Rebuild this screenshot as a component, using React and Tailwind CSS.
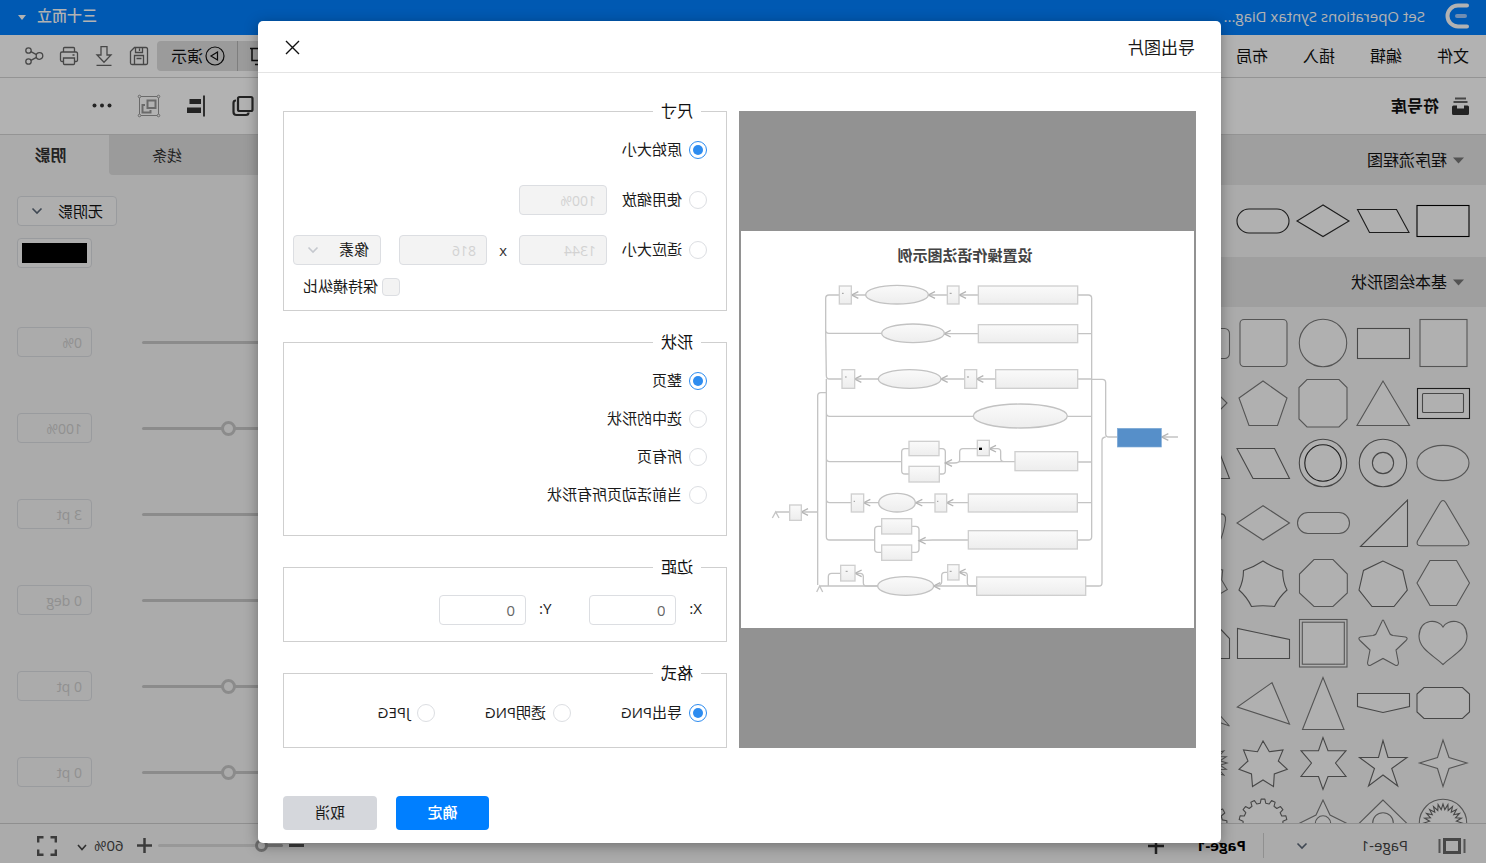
import React from "react";

const THIN = "#7a7a7a";
const MID = "#666";
const DARK = "#2a2a2a";

function Svg({ w, h, className = "", children }) {
  return (
    <svg width={w} height={h} viewBox={`0 0 ${w} ${h}`} fill="none" aria-hidden="true" className={`shrink-0 ${className}`}>
      {children}
    </svg>
  );
}

function Chevron({ className = "" }) {
  return (
    <Svg w={12} h={8} className={className}>
      <path d="M1.5 1.5 L6 6 L10.5 1.5" stroke="currentColor" strokeWidth="1.6" />
    </Svg>
  );
}

/* ---------- stencil shapes, each drawn in a 60 x 60 cell ---------- */

function burst(n, outer, inner, cx = 30, cy = 30) {
  const pts = [];
  for (let i = 0; i < n * 2; i++) {
    const r = i % 2 ? inner : outer;
    const a = (Math.PI * i) / n - Math.PI / 2;
    pts.push(`${(cx + r * Math.cos(a)).toFixed(1)},${(cy + r * Math.sin(a)).toFixed(1)}`);
  }
  return pts.join(" ");
}

function gear(n, outer, inner) {
  const pts = [];
  const step = (Math.PI * 2) / n;
  const at = (r, a) => pts.push(`${(30 + r * Math.cos(a)).toFixed(1)},${(30 + r * Math.sin(a)).toFixed(1)}`);
  for (let i = 0; i < n; i++) {
    const a = i * step - Math.PI / 2;
    at(inner, a - step * 0.3);
    at(outer, a - step * 0.18);
    at(outer, a + step * 0.18);
    at(inner, a + step * 0.3);
  }
  return pts.join(" ");
}

const P = (points, stroke = THIN) => <polygon points={points} stroke={stroke} />;
const R = (x, y, w, h, rx = 0, stroke = THIN) => <rect x={x} y={y} width={w} height={h} rx={rx} stroke={stroke} />;

const flowShapes = [
  R(4, 14.5, 52, 31, 0, "#000"),
  P("16.5,18.5 55.5,18.5 43.5,41.5 4,41.5", DARK),
  P("30,14 56,30 30,45.5 4,30", DARK),
  R(4, 18, 52, 24, 12, DARK),
];

const basicShapes = [
  R(6, 6.5, 47, 47),
  R(3.5, 15.5, 52, 30, 0, MID),
  <circle cx="30" cy="30" r="23.7" stroke={THIN} />,
  R(6, 6.5, 47, 47, 4),
  R(3.5, 15.5, 52, 30, 5),

  <>
    {R(3.5, 15.5, 52, 30, 0, DARK)}
    {R(9.5, 20.5, 41, 19, 1, MID)}
  </>,
  P("30,8 56,52.5 3.5,52.5"),
  P("14,6.5 46,6.5 54,14.5 54,46 46,54 14,54 6,46 6,14.5"),
  P("30,8 54,25 44,52.5 15.5,52.5 6,25"),
  P("30,6 54,30 30,54 6,30"),

  <ellipse cx="30" cy="30" rx="26" ry="17.6" stroke={THIN} />,
  <>
    <circle cx="30" cy="30" r="23.7" stroke={MID} />
    <circle cx="30" cy="30" r="10.6" stroke={MID} />
  </>,
  <>
    <circle cx="30" cy="30" r="23.7" stroke={MID} />
    <circle cx="30" cy="30" r="18.2" stroke={DARK} />
  </>,
  P("18.5,15.5 56,15.5 40,45.5 3.5,45.5", MID),
  P("3.5,45.5 15,15.5 45,15.5 56,45.5", MID),

  <path d="M27.3 9.5 Q30 5.5 32.7 9.5 L55.5 48 Q57 52.5 52.5 52.7 H7.5 Q3 52.5 4.5 48 Z" stroke={THIN} />,
  P("5.5,7 5.5,53.5 52.5,53.5", MID),
  R(3.5, 19.5, 52, 21, 10.5),
  P("30,12.7 56,30 30,47 3.5,30"),
  <path d="M14 21 Q7 20 7.5 27 Q9 40 14 50 Q30 56 46 50 Q51 40 52.5 27 Q53 20 46 21 Z" stroke={THIN} />,

  P("16.5,7.5 43,7.5 56,30 43,52.5 16.5,52.5 3.5,30"),
  P("30,8 49.5,17.5 54,37 41,53.5 19,53.5 5.7,37 10.3,17.5", MID),
  P("20,6.5 39,6.5 53.5,21 53.5,40 39,53.5 20,53.5 5.7,40 5.7,21"),
  <path
    d="M30 8 Q39 14 49.5 17.5 Q49.5 28 54 37 Q46 44 41.5 53.5 Q30 52 18.5 53.5 Q14 44 6 37 Q10.5 28 10.3 17.5 Q21 14 30 8 Z"
    stroke={MID}
  />,
  P("30,8 37,15 49.5,17 48.5,27 54,36.5 46,42 42,53 30,49 18,53 15,42 5.7,36.5 11.3,27 10.3,17 23,15"),

  <path d="M30 14 C26 6 7 4.5 6 23 C6 36 20 42 30 51.5 C40 42 54 36 54 23 C53 4.5 34 6 30 14 Z" stroke={THIN} />,
  <path
    d="M28.7 9 Q30 5 31.3 9 L37 21 Q38 22 40 22.5 L52.5 24 Q55.5 25 53 27.5 L43 37 L45.5 50 Q45 53.5 42 52 L30 45.5 L18 52 Q15 53.5 14.5 50 L17 37 L7 27.5 Q4.5 25 7.5 24 L20 22.5 Q22 22 23 21 Z"
    stroke={THIN}
  />,
  <>
    <rect x="7.5" y="8" width="44.5" height="44.5" stroke="#a8a8a8" strokeWidth="3" />
    {R(6, 6.5, 47.5, 47.5)}
    {R(8.7, 9.2, 42, 42)}
  </>,
  P("55.5,15.5 55.5,45.5 3.5,45.5 3.5,26.5", MID),
  P("13,15.5 46,15.5 55.5,25.5 55.5,45.5 3.5,45.5 3.5,25.5", MID),

  P("10.5,14.5 49,14.5 56,21 56,39 49,45.5 10.5,45.5 3.5,39 3.5,21", MID),
  P("3.5,20.5 55.5,20.5 55.5,33.5 30,39.5 3.5,33.5", MID),
  P("30,4.5 50.5,56.5 9,56.5"),
  P("21,9.7 55.7,34 3.5,51"),
  P("3.5,53 18,37 50,12 40,40"),

  P("30,7 35.5,24.5 53.5,30 35.5,35.5 30,53.5 24,35.5 6,30 24,24.5"),
  P("30,7.5 34.5,24.5 53.5,24.5 38.5,35.5 44.5,53 30,42 15.3,53 21.3,35.5 6,24.5 25,24.5", MID),
  P("30,4.5 34.5,17.7 52,17.7 41.5,30 52,43.5 34.5,43.5 30,56.5 25,43.5 7,43.5 17.5,30 7,17.7 25,17.7", MID),
  P("30,8 35.5,18.7 49.5,17 45,28 54,36.3 41.5,41 40.5,53.5 30,47 19.5,53.5 18.7,41 5.7,36.3 14.7,28 10,17 23.7,18.7", MID),
  <polygon points={burst(24, 24, 17)} stroke={THIN} />,

  <>
    <circle cx="30" cy="30" r="23.7" stroke={THIN} />
    <polygon points={burst(24, 19, 13.5)} stroke={MID} />
  </>,
  <>
    {P("30,7 54,30.5 30,54 6,30.5")}
    <circle cx="30" cy="30" r="10.3" stroke={THIN} />
  </>,
  <>
    {P("30,7 37,22 53,30 37,38 30,53 23,38 7,30 23,22")}
    <circle cx="30" cy="30.5" r="7.7" stroke={THIN} />
  </>,
  <polygon points={gear(14, 24, 20)} strokeLinejoin="round" stroke={MID} />,
  <polygon points={gear(12, 24, 19.5)} strokeLinejoin="round" stroke={MID} />,
];

function Stencil({ shapes }) {
  return (
    <div className="grid grid-cols-[repeat(5,60px)] bg-[#f5f5f5] py-1.5 pl-[13px]">
      {shapes.map((s, i) => (
        <svg key={i} width="60" height="60" viewBox="0 0 60 60" fill="#fdfdfd" strokeWidth="1.1" aria-hidden="true">
          {s}
        </svg>
      ))}
    </div>
  );
}

function StencilHeading({ children }) {
  return (
    <button type="button" className="flex h-[50px] w-full shrink-0 items-center gap-[6px] bg-[#e4e4e4] pl-[22px] text-base text-[#111]">
      <Svg w={11} h={7} className="text-[#777]">
        <path d="M0 0.5 H11 L5.5 6.5 Z" fill="currentColor" />
      </Svg>
      {children}
    </button>
  );
}

/* ---------- toolbar icons ---------- */

const SaveIcon = () => (
  <Svg w={20} h={20}>
    <path
      d="M1.5 3 Q1.5 1.5 3 1.5 H14.5 L18.5 5.5 V17 Q18.5 18.5 17 18.5 H3 Q1.5 18.5 1.5 17 Z M5.5 18 V9.5 H14.5 V18 M6.5 1.5 V6.5 H13.5 V1.5 M9.5 2.5 V5 M7.5 12.5 H12.5"
      stroke="#666"
      strokeWidth="1.3"
    />
  </Svg>
);
const DownloadIcon = () => (
  <Svg w={20} h={20}>
    <path d="M7 0.7 H13 V9 H17 L10 16.3 L3 9 H7 Z M2.5 19.3 H17.5" stroke="#666" strokeWidth="1.3" />
  </Svg>
);
const PrintIcon = () => (
  <Svg w={20} h={20}>
    <path
      d="M4.5 5.5 V2.5 Q4.500 1.500 5.500 1.500 H14.5 Q15.500 1.500 15.500 2.500 V5.5 M4.5 15.5 H3 Q1.5 15.5 1.5 14 V7.5 Q1.5 6 3 6 H17 Q18.5 6 18.5 7.5 V14 Q18.5 15.5 17 15.5 H15.5 M4.5 12 H15.5 V17.500 Q15.500 18.500 14.500 18.500 H5.500 Q4.500 18.500 4.500 17.500 Z M4.500 9 H6.500"
      stroke="#666"
      strokeWidth="1.3"
    />
  </Svg>
);
const ShareIcon = () => (
  <Svg w={20} h={20}>
    <g stroke="#666" strokeWidth="1.3">
      <circle cx="4.500" cy="10" r="3.300" />
      <circle cx="15.500" cy="4.500" r="2.700" />
      <circle cx="15.500" cy="15.500" r="2.700" />
      <path d="M7.500 8.600 L13.100 5.600 M7.500 11.400 L13.100 14.400" />
    </g>
  </Svg>
);
const PresentIcon = () => (
  <Svg w={20} h={20}>
    <path d="M0 2.5 H20 M2 2.5 V14.5 H18 V2.5 M10 14.5 V18.5 M5 18.5 H15" stroke="#111" strokeWidth="1.5" />
  </Svg>
);
const PlayIcon = () => (
  <Svg w={20} h={20}>
    <circle cx="10" cy="10" r="9" stroke="#111" strokeWidth="1.2" />
    <path d="M7.5 6 L14 10 L7.5 14 Z" stroke="#111" strokeWidth="1.2" />
  </Svg>
);
const CopyIcon = () => (
  <Svg w={24} h={24}>
    <rect x="2.5" y="3" width="14.500" height="14" rx="1.5" stroke="#333" strokeWidth="2.2" />
    <path d="M6.500 18.500 Q6.500 21 9 21 H18.5 Q21.500 21 21.500 18 V9 Q21.500 6.500 19 6.500" stroke="#333" strokeWidth="2.2" />
  </Svg>
);
const AlignIcon = () => (
  <Svg w={24} h={24}>
    <path d="M4 1.5 V22.5" stroke="#444" strokeWidth="2" />
    <rect x="7" y="5" width="11.500" height="5" fill="#333" />
    <rect x="7" y="13.5" width="14" height="5.5" fill="#333" />
  </Svg>
);
const GroupIcon = () => (
  <Svg w={24} h={24}>
    <g stroke="#999">
      <path d="M4 2.5 H20 M4 21.5 H20 M2.5 4 V20 M21.5 4 V20" />
      <circle cx="2.5" cy="2.5" r="1.3" />
      <circle cx="21.5" cy="2.5" r="1.3" />
      <circle cx="2.5" cy="21.5" r="1.3" />
      <circle cx="21.5" cy="21.5" r="1.3" />
      <rect x="5.5" y="6.5" width="8" height="7.5" strokeWidth="2" />
      <path d="M16 11 H18.5 V18.5 H10.5 V16" strokeWidth="2" />
    </g>
  </Svg>
);
const MoreIcon = () => (
  <Svg w={24} h={24}>
    <circle cx="4.5" cy="11.5" r="2" fill="#333" />
    <circle cx="12" cy="11.5" r="2" fill="#333" />
    <circle cx="19.5" cy="11.5" r="2" fill="#333" />
  </Svg>
);

function IconButton({ label, children }) {
  return (
    <button type="button" aria-label={label} className="flex shrink-0 items-center justify-center">
      {children}
    </button>
  );
}

/* ---------- right panel ---------- */

const rangeBase =
  "appearance-none rounded-full bg-[#c8c8c8] h-[3px] [&::-webkit-slider-thumb]:appearance-none [&::-webkit-slider-thumb]:size-[15px] [&::-webkit-slider-thumb]:rounded-full [&::-webkit-slider-thumb]:border-[3px] [&::-webkit-slider-thumb]:border-solid [&::-webkit-slider-thumb]:border-[#c8c8c8] [&::-webkit-slider-thumb]:bg-[#f5f5f5]";

const shadowRows = [
  { label: "透明度", value: "0%", pos: 0 },
  { label: "大小", value: "100%", pos: 50 },
  { label: "模糊", value: "3 pt", pos: 5 },
  { label: "角度", value: "0 deg", pos: 0 },
  { label: "水平", value: "0 pt", pos: 50 },
  { label: "垂直", value: "0 pt", pos: 50 },
];

function RightPanel() {
  return (
    <aside className="flex w-[340px] shrink-0 flex-col bg-[#f5f5f5]">
      <div className="flex h-10 shrink-0 text-[15px]">
        <button type="button" className="flex-1 bg-[#dedede] text-[#333]">填充</button>
        <button type="button" className="w-[116px] rounded-br-sm bg-[#dedede] text-[#333]">线条</button>
        <button type="button" className="w-[109px] pl-2 text-base font-bold text-[#333]">阴影</button>
      </div>
      <div className="flex flex-col items-end gap-3 pt-[21px] pr-[17px]">
        <div className="relative flex w-[100px] items-center">
          <select aria-label="阴影样式" className="h-[30px] w-full appearance-none rounded border border-[#dcdee2] bg-[#fafafa] pl-[13px] text-[15px] text-[#111]">
            <option>无阴影</option>
          </select>
          <Chevron className="pointer-events-none absolute right-[14px] text-[#5b6777]" />
        </div>
        <button type="button" aria-label="阴影颜色" className="h-[30px] w-[75px] rounded border border-[#dcdee2] bg-[#fafafa] p-1">
          <span className="block h-full bg-black" />
        </button>
      </div>
      <div className="flex flex-col gap-14 pt-[59px] pr-[17px] pl-6">
        {shadowRows.map((r, i) => (
          <div key={i} className="flex h-[30px] items-center justify-between">
            <input type="range" disabled defaultValue={r.pos} aria-label={r.label} className={`w-[174px] ${rangeBase}`} />
            <input
              type="text"
              disabled
              defaultValue={r.value}
              aria-label={`${r.label}数值`}
              className="h-[30px] w-[75px] rounded border border-[#dcdee2] pl-[9px] text-sm font-medium text-[#cfcfcf]"
            />
          </div>
        ))}
      </div>
    </aside>
  );
}

/* ---------- preview diagram ---------- */

const boxes = [
  [718, 168, 298, 54], [301, 168, 36, 54], [625, 168, 35, 54], [718, 284, 298, 54],
  [770, 419, 246, 56], [677, 419, 36, 56], [309, 419, 38, 56],
  [828, 665, 188, 57], [715, 631, 36, 46], [510, 634, 90, 43], [510, 709, 91, 47],
  [688, 792, 327, 54], [588, 792, 35, 54], [337, 792, 37, 54],
  [688, 902, 327, 55], [428, 866, 90, 46], [428, 945, 90, 46],
  [713, 1041, 327, 55], [626, 1004, 34, 46], [305, 1006, 43, 47], [152, 825, 35, 46],
];
const ovals = [
  [474, 194, 94, 28], [522, 310, 94, 28], [512, 447, 94, 28], [844, 558, 141, 36], [474, 818, 55, 28], [500, 1068, 84, 28],
];
const tips = [
  [661, 195], [568, 195], [338, 195], [615, 311], [713, 447], [606, 447], [347, 447], [1268, 621], [751, 656],
  [619, 699], [623, 818], [530, 818], [374, 818], [540, 932], [660, 1027], [584, 1068], [348, 1030], [187, 846],
];
const wires = [
  "M718 195 H337 M718 311 H615 M770 447 H347 M688 818 H374 M688 930 H580 L540 932 M713 1068 H584 M1268 621 H1317",
  "M1016 195 H1048 Q1058 195 1058 205 V920 Q1058 930 1048 930 H1016 M1016 311 H1058 M1016 447 H1058 M985 559 H1058 M1016 696 H1058 M1016 818 H1058",
  "M1058 448 H1090 Q1100 448 1100 458 V611 Q1100 621 1110 621 H1135 M1040 1068 H1080 Q1089 1068 1089 1058 V632 Q1089 622 1100 621",
  "M301 195 H270 Q260 195 260 205 V300 Q260 310 270 310 H428 M260 300 L262 437 Q262 447 272 447 H309",
  "M262 447 V920 Q262 930 272 930 H407 M262 549 Q262 559 272 559 H703 M262 685 Q262 695 272 695 H488 M262 808 Q262 818 272 818 H337",
  "M262 488 H246 Q236 488 236 498 V1065 M236 846 H187 M152 846 H110 M100 864 L110 846 L120 864 M233 1086 L242 1068 L251 1086 M242 1068 H416",
  "M828 695 H662 Q655 699 645 699 H619 M828 695 H795 Q785 695 785 685 V665 Q785 656 775 656 H751 M715 656 H672 Q662 656 662 666 V690 Q662 699 645 699",
  "M510 656 H498 Q488 656 488 666 V722 Q488 732 498 732 H510 M600 656 H609 Q619 656 619 666 V722 Q619 732 609 732 H600",
  "M428 889 H417 Q407 889 407 899 V957 Q407 967 417 967 H428 M518 889 H530 Q540 889 540 899 V957 Q540 967 530 967 H518",
  "M713 1068 H695 Q685 1068 685 1058 V1037 Q685 1027 675 1027 H660 M626 1027 H618 Q608 1027 608 1037 V1057 Q608 1066 590 1068",
  "M416 1068 H383 Q373 1068 373 1058 V1040 Q373 1030 363 1030 H348 M305 1030 H278 Q268 1030 268 1040 V1068",
];

function Diagram() {
  return (
    <svg viewBox="0 0 453 397" className="block w-full bg-white" role="img" aria-label="设置操作语法图示例">
      <defs>
        <linearGradient id="node" x1="0" y1="0" x2="0" y2="1">
          <stop offset="0" stopColor="#fafafa" />
          <stop offset="1" stopColor="#ededed" />
        </linearGradient>
      </defs>
      <text x="229" y="30" textAnchor="middle" className="fill-[#444] text-[15px] font-bold">设置操作语法图示例</text>
      <g transform="translate(455 -1) scale(-0.33333 0.33333)" fill="none" stroke="#c4c4c4" strokeWidth="4">
        {wires.map((d) => <path key={d} d={d} />)}
        {tips.map(([x, y]) => <path key={`${x}-${y}`} d={`M${x + 20} ${y - 10} L${x} ${y} L${x + 20} ${y + 10}`} stroke="#b4b4b4" />)}
        <g fill="url(#node)" stroke="#cfcfcf">
          {boxes.map(([x, y, w, h]) => <rect key={`${x}-${y}`} x={x} y={y} width={w} height={h} />)}
          {ovals.map(([x, y, rx, ry]) => <ellipse key={`${x}-${y}`} cx={x} cy={y} rx={rx} ry={ry} stroke="#c2c2c2" />)}
        </g>
        <rect x="1135" y="595" width="132" height="56" fill="#568fc9" stroke="#7faad6" strokeWidth="2" />
        <rect x="720" y="653" width="9" height="7" fill="#000" stroke="none" />
        <path d="M309 190 H314 M632 190 H638 M318 441 H323 M684 441 H690 M344 814 H348 M594 814 H598 M320 1024 H326 M632 1024 H638" stroke="#999" strokeWidth="3" />
      </g>
    </svg>
  );
}

/* ---------- export dialog ---------- */

function Radio({ name, label, defaultChecked, className = "" }) {
  return (
    <label className={`flex items-center gap-[7px] ${className}`}>
      <input
        type="radio"
        name={name}
        defaultChecked={defaultChecked}
        className="grid size-[18px] shrink-0 appearance-none place-content-center rounded-full border border-[#dcdee2] bg-white before:size-[10px] before:rounded-full before:bg-[#2d8cf0] before:opacity-0 checked:border-[#2d8cf0] checked:before:opacity-100"
      />
      <span className="pb-0.5">{label}</span>
    </label>
  );
}

function Group({ title, className = "", children }) {
  return (
    <fieldset className={`border border-[#cfcfcf] pl-[19px] ${className}`}>
      <legend className="ml-[6px] px-2 text-base leading-6 text-[#111]">{title}</legend>
      {children}
    </fieldset>
  );
}

const disabledField = "h-[30px] w-[88px] rounded border border-[#dcdee2] bg-[#f3f3f3] pl-[10px] text-sm font-medium text-[#d2d2d2]";
const field = "h-[30px] w-[87px] rounded border border-[#dcdee2] bg-white pl-[10px] text-[15px] text-[#666]";

function ExportDialog() {
  return (
    <section
      role="dialog"
      aria-label="导出图片"
      className="w-full max-w-[963px] self-start rounded-[5px] bg-white text-[15px] leading-5 text-[#1a1a1a] shadow-[0_3px_14px_rgba(0,0,0,0.35)]"
    >
      <header className="flex h-[52px] items-center justify-between border-b border-[#e4e4e4] pt-0.5 pr-[27px] pl-[26px]">
        <h2 className="text-[17px] text-[#1a1a1a]">导出图片</h2>
        <button type="button" aria-label="关闭">
          <Svg w={15} h={15}>
            <path d="M1 1 L14 14 M14 1 L1 14" stroke="#111" strokeWidth="1.4" />
          </Svg>
        </button>
      </header>
      <div className="flex gap-3 px-[25px] pt-[26px]">
        <div className="mt-3 flex flex-1 items-center bg-[#929292] px-0.5">
          <Diagram />
        </div>
        <form className="flex w-[444px] shrink-0 flex-col gap-[19px]">
          <Group title="尺寸" className="pb-[11px]">
            <div className="pt-0.5">
              <div className="flex h-[50px] items-center">
                <Radio name="size" label="原始大小" defaultChecked />
              </div>
              <div className="flex h-[50px] items-center gap-[15px]">
                <Radio name="size" label="使用缩放" />
                <input aria-label="缩放比例" disabled defaultValue="100%" className={disabledField} />
              </div>
              <div className="flex h-[50px] items-center">
                <Radio name="size" label="适应大小" className="mr-[15px]" />
                <input aria-label="宽度" disabled defaultValue="1344" className={disabledField} />
                <span className="w-8 text-center text-[#333]">x</span>
                <input aria-label="高度" disabled defaultValue="816" className={disabledField} />
                <div className="relative ml-[18px] flex w-[88px] items-center">
                  <select
                    aria-label="单位"
                    disabled
                    className="h-[30px] w-full appearance-none rounded border border-[#dcdee2] bg-[#f3f3f3] pb-0.5 pl-[11px] text-[15px] text-[#1a1a1a] opacity-100"
                  >
                    <option>像素</option>
                  </select>
                  <Chevron className="pointer-events-none absolute right-[14px] text-[#c5c8ce]" />
                </div>
              </div>
              <label className="flex h-6 items-center gap-1 pl-[307px]">
                <input type="checkbox" disabled className="size-[18px] appearance-none rounded-sm border border-[#dcdee2] bg-[#f3f3f3]" />
                <span className="pb-0.5">保持横纵比</span>
              </label>
            </div>
          </Group>
          <Group title="形状" className="pb-[21px]">
            <div className="pt-2">
              <Radio name="shape" label="整页" defaultChecked className="h-[38px]" />
              <Radio name="shape" label="选中的形状" className="h-[38px]" />
              <Radio name="shape" label="所有页" className="h-[38px]" />
              <Radio name="shape" label="当前活动页所有形状" className="h-[38px]" />
            </div>
          </Group>
          <Group title="边距" className="pb-4">
            <div className="flex gap-[38px] pt-4 pl-[5px]">
              <label className="flex items-center gap-[13px]">
                <span className="pb-1">X:</span>
                <input defaultValue="0" className={field} />
              </label>
              <label className="flex items-center gap-[13px]">
                <span className="pb-1">Y:</span>
                <input defaultValue="0" className={field} />
              </label>
            </div>
          </Group>
          <Group title="格式" className="pb-[23px]">
            <div className="flex h-[39px] items-end">
              <Radio name="format" label="导出PNG" defaultChecked className="w-[136px]" />
              <Radio name="format" label="透明PNG" className="w-[136px]" />
              <Radio name="format" label="JPEG" />
            </div>
          </Group>
        </form>
      </div>
      <footer className="flex justify-end gap-[19px] px-[25px] pt-12 pb-[13px]">
        <button type="button" className="h-[34px] w-[93px] rounded bg-[#007fff] pb-0.5 font-medium text-white">确定</button>
        <button type="button" className="h-[34px] w-[94px] rounded bg-[#d5d7dc] pb-0.5 text-[#1a1a1a]">取消</button>
      </footer>
    </section>
  );
}

/* ---------- page ---------- */

export default function App() {
  return (
    <div className="relative flex h-screen -scale-x-100 flex-col overflow-hidden bg-white font-['Open_Sans','Noto_Sans_CJK_SC',sans-serif] text-[#111]">
      <header className="flex h-[35px] shrink-0 items-center bg-[#0080ff] pr-[18px] pb-1 pl-[17px] text-white">
        <Svg w={24} h={28}>
          <path d="M2 3.5 H11 A10.500 10.500 0 0 1 11 24.5 H2" stroke="#fff" strokeWidth="4" strokeLinecap="round" />
          <path d="M4 14 H12" stroke="#9fcaff" strokeWidth="4" strokeLinecap="round" />
        </Svg>
        <h1 className="ml-5 text-[15px] leading-6 font-medium whitespace-nowrap">Set Operations Syntax Diag...</h1>
        <button type="button" className="ml-auto flex items-center gap-[11px] text-[15px] font-medium">
          三十而立
          <Svg w={8} h={5} className="mt-1">
            <path d="M0 0 H8 L4 5 Z" fill="#fff" />
          </Svg>
        </button>
      </header>

      <nav className="flex h-[43px] shrink-0 items-center border-b border-[#d5d5d5] pr-6 pl-[17px] text-base">
        <div className="flex gap-[35px]">
          <button type="button">文件</button>
          <button type="button">编辑</button>
          <button type="button">插入</button>
          <button type="button">布局</button>
        </div>
        <div className="mr-2 ml-auto flex h-[30px] overflow-hidden rounded bg-[#dedede]">
          <button type="button" aria-label="放映" className="flex w-[46px] items-center justify-center border-r border-[#b5b5b5]">
            <PresentIcon />
          </button>
          <button type="button" className="flex w-20 items-center gap-0.5 pl-3">
            <PlayIcon />
            演示
          </button>
        </div>
        <div className="flex gap-[15px]">
          <IconButton label="保存"><SaveIcon /></IconButton>
          <IconButton label="下载"><DownloadIcon /></IconButton>
          <IconButton label="打印"><PrintIcon /></IconButton>
          <IconButton label="分享"><ShareIcon /></IconButton>
        </div>
      </nav>

      <div className="flex h-14 shrink-0 items-center justify-between pr-[90px] pl-4">
        <h2 className="flex items-center gap-3 text-base font-bold text-[#111]">
          <Svg w={19} h={19}>
            <path d="M4 1.5 H15 M2.500 5 H16.500" stroke="#666" strokeWidth="2" />
            <path d="M1 10 Q1 8.500 2.500 8.500 H6 V11.500 H13 V8.500 H16.500 Q18 8.500 18 10 V16.500 Q18 18 16.500 18 H2.500 Q1 18 1 16.500 Z" fill="#333" />
          </Svg>
          符号库
        </h2>
        <div className="flex gap-[23px]">
          <IconButton label="复制"><CopyIcon /></IconButton>
          <IconButton label="对齐"><AlignIcon /></IconButton>
          <IconButton label="组合"><GroupIcon /></IconButton>
          <IconButton label="更多"><MoreIcon /></IconButton>
        </div>
      </div>

      <main className="flex min-h-0 flex-1 border-t border-[#d5d5d5]">
        <aside className="w-[320px] shrink-0 overflow-hidden bg-[#f5f5f5]">
          <StencilHeading>程序流程图</StencilHeading>
          <Stencil shapes={flowShapes} />
          <StencilHeading>基本绘图形状</StencilHeading>
          <Stencil shapes={basicShapes} />
        </aside>
        <div className="flex-1 bg-[#e8e8e8]" />
        <RightPanel />
      </main>

      <footer className="flex h-10 shrink-0 items-center border-t border-[#cdcdcd] bg-[#f5f5f5] pt-1 pl-5 text-[15px]">
        <Svg w={28} h={16}>
          <path d="M1.5 1 V15 M26.5 1 V15" stroke="#777" strokeWidth="2" />
          <rect x="6.5" y="1.5" width="15" height="13" stroke="#666" strokeWidth="3" />
        </Svg>
        <span className="ml-[30px] w-[100px] text-[#444]">Page-1</span>
        <Chevron className="text-[#5b6777]" />
        <span className="ml-8 h-[25px] border-l border-[#cfcfcf]" />
        <button type="button" className="ml-[17px] w-20 text-left text-[15px] font-bold text-black">Page-1</button>
        <button type="button" aria-label="新增页" className="ml-0.5">
          <Svg w={16} h={16}>
            <path d="M8 0 V16 M0 8 H16" stroke="#333" strokeWidth="2.5" />
          </Svg>
        </button>
        <div className="ml-auto flex items-center pr-[37px]">
          <button type="button" aria-label="缩小">
            <Svg w={15} h={15}>
              <path d="M0 7.5 H15" stroke="#555" strokeWidth="3" />
            </Svg>
          </button>
          <input
            type="range"
            aria-label="缩放"
            defaultValue="13"
            className="mx-[6px] h-[3px] w-[125px] appearance-none rounded-full bg-[linear-gradient(90deg,#b0b0b0_16%,#dadada_16%)] [&::-webkit-slider-thumb]:size-[13px] [&::-webkit-slider-thumb]:appearance-none [&::-webkit-slider-thumb]:rounded-full [&::-webkit-slider-thumb]:border-[3px] [&::-webkit-slider-thumb]:border-solid [&::-webkit-slider-thumb]:border-[#a0a0a0] [&::-webkit-slider-thumb]:bg-[#f5f5f5]"
          />
          <button type="button" aria-label="放大">
            <Svg w={15} h={15}>
              <path d="M0 7.5 H15 M7.5 0 V15" stroke="#555" strokeWidth="2.5" />
            </Svg>
          </button>
          <button type="button" className="ml-[13px] flex items-center gap-[7px] text-[#444]">
            60%
            <Svg w={10} h={7} className="mt-1">
              <path d="M1 1 L5 5.5 L9 1" stroke="#444" strokeWidth="1.6" />
            </Svg>
          </button>
          <button type="button" aria-label="全屏" className="ml-5">
            <Svg w={20} h={20}>
              <path d="M1.2 6.5 V1.2 H6.5 M13.5 1.2 H18.8 V6.5 M18.8 13.5 V18.8 H13.5 M6.5 18.8 H1.2 V13.5" stroke="#555" strokeWidth="2.4" />
            </Svg>
          </button>
        </div>
      </footer>

      <div className="absolute inset-0 flex justify-center bg-black/30 pt-[21px] pl-[7px]">
        <ExportDialog />
      </div>
    </div>
  );
}
